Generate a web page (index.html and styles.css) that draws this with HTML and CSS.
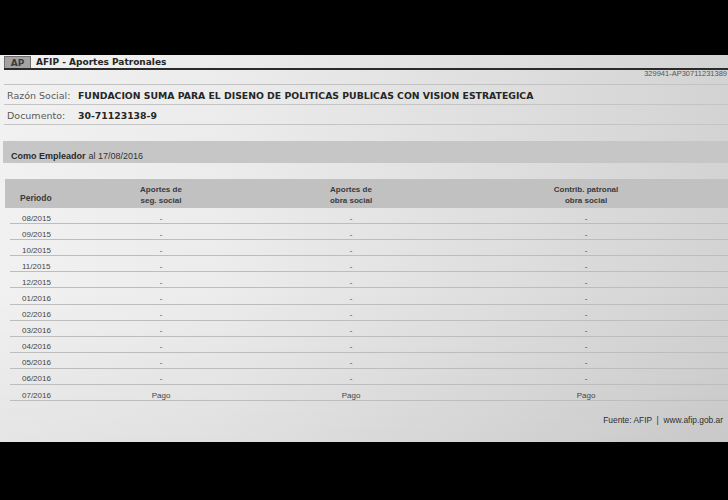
FILE: index.html
```html
<!DOCTYPE html>
<html lang="es">
<head>
<meta charset="utf-8">
<title>AFIP - Aportes Patronales</title>
<link rel="stylesheet" href="styles.css">
</head>
<body>
<div class="paper">
  <div class="topbar">
    <span class="ap">AP</span>
    <span class="title">AFIP - Aportes Patronales</span>
  </div>
  <div class="ref">329941-AP30711231389</div>
  <div class="info">
    <div class="info-row"><span class="label">Razón Social:</span><span class="value">FUNDACION SUMA PARA EL DISENO DE POLITICAS PUBLICAS CON VISION ESTRATEGICA</span></div>
    <div class="info-row"><span class="label">Documento:</span><span class="value">30-71123138-9</span></div>
  </div>
  <div class="section"><b>Como Empleador</b> al 17/08/2016</div>
  <div class="table">
    <div class="thead">
      <div class="c1">Periodo</div>
      <div class="cc">Aportes de<br>seg. social</div>
      <div class="cc">Aportes de<br>obra social</div>
      <div class="cc">Contrib. patronal<br>obra social</div>
    </div>
    <div class="tr"><div class="c1">08/2015</div><div class="cc">-</div><div class="cc">-</div><div class="cc">-</div></div>
    <div class="tr"><div class="c1">09/2015</div><div class="cc">-</div><div class="cc">-</div><div class="cc">-</div></div>
    <div class="tr"><div class="c1">10/2015</div><div class="cc">-</div><div class="cc">-</div><div class="cc">-</div></div>
    <div class="tr"><div class="c1">11/2015</div><div class="cc">-</div><div class="cc">-</div><div class="cc">-</div></div>
    <div class="tr"><div class="c1">12/2015</div><div class="cc">-</div><div class="cc">-</div><div class="cc">-</div></div>
    <div class="tr"><div class="c1">01/2016</div><div class="cc">-</div><div class="cc">-</div><div class="cc">-</div></div>
    <div class="tr"><div class="c1">02/2016</div><div class="cc">-</div><div class="cc">-</div><div class="cc">-</div></div>
    <div class="tr"><div class="c1">03/2016</div><div class="cc">-</div><div class="cc">-</div><div class="cc">-</div></div>
    <div class="tr"><div class="c1">04/2016</div><div class="cc">-</div><div class="cc">-</div><div class="cc">-</div></div>
    <div class="tr"><div class="c1">05/2016</div><div class="cc">-</div><div class="cc">-</div><div class="cc">-</div></div>
    <div class="tr"><div class="c1">06/2016</div><div class="cc">-</div><div class="cc">-</div><div class="cc">-</div></div>
    <div class="tr"><div class="c1">07/2016</div><div class="cc">Pago</div><div class="cc">Pago</div><div class="cc">Pago</div></div>
  </div>
  <div class="footer">Fuente: AFIP &nbsp;|&nbsp; www.afip.gob.ar</div>
</div>
</body>
</html>
```
FILE: styles.css
```css
html, body {
  margin: 0;
  padding: 0;
  background: #000;
}
body {
  width: 728px;
  height: 500px;
  overflow: hidden;
}
.paper {
  margin-top: 55px;
  height: 387px;
  width: 728px;
  overflow: hidden;
  background:
    linear-gradient(180deg, rgba(0,0,0,0) 60%, rgba(0,0,0,0.05) 100%),
    linear-gradient(90deg, #f1f1f1 0%, #ececec 30%, #dedede 70%, #d3d3d3 100%);
  font-family: "Liberation Sans", Arial, sans-serif;
  color: #3a3a3a;
}
.topbar {
  display: flex;
  align-items: stretch;
  height: 12px;
  padding-top: 1px;
  border-bottom: 2px solid #2b2b2b;
  margin-left: 4px;
}
.ap {
  width: 25px;
  background: #a3a3a3;
  border: 1px solid #6f6f6f;
  border-bottom: none;
  font-family: "DejaVu Sans", Verdana, sans-serif;
  font-weight: bold;
  font-size: 9px;
  line-height: 12px;
  color: #3c3c3c;
  text-align: center;
}
.title {
  padding-left: 5px;
  font-family: "DejaVu Sans", Verdana, sans-serif;
  font-weight: bold;
  font-size: 9px;
  line-height: 12px;
  color: #262626;
}
.ref {
  text-align: right;
  font-size: 7.5px;
  line-height: 5px;
  padding-top: 1px;
  color: #555;
  white-space: nowrap;
  padding-right: 1px;
  height: 13px;
}
.info {
  border-top: 1px solid #c2c2c2;
  margin-left: 4px;
}
.info-row {
  display: flex;
  align-items: center;
  height: 18px;
  padding-top: 1px;
  border-bottom: 1px solid #c4c4c4;
  font-family: "DejaVu Sans", Verdana, sans-serif;
  font-size: 9.5px;
}
.label {
  width: 71px;
  padding-left: 3px;
  color: #5a5a5a;
}
.value {
  font-weight: bold;
  font-size: 9.3px;
  color: #262626;
  white-space: nowrap;
}
.section {
  display: flex;
  align-items: center;
  gap: 3px;
  margin: 16px 0 0 3px;
  height: 22px;
  padding: 8px 0 0 8px;
  box-sizing: border-box;
  background: #c6c6c6;
  font-size: 9px;
  line-height: 1;
  color: #333;
}
.section b {
  font-weight: bold;
  color: #2a2a2a;
}
.table {
  margin: 16px 0 0 5px;
}
.thead, .tr {
  display: grid;
  grid-template-columns: 85px 142px 238px 232px 1fr;
}
.thead {
  height: 29px;
  box-sizing: border-box;
  padding-top: 6px;
  align-items: start;
  background: #c1c1c1;
  font-weight: bold;
  font-size: 8px;
  line-height: 10.5px;
  color: #3a3a3a;
}
.thead .c1 {
  padding-top: 8px;
  padding-left: 15px;
  font-size: 8.5px;
}
.tr {
  align-items: start;
  box-sizing: border-box;
  height: 16.1px;
  padding-top: 5.5px;
  border-bottom: 1px solid #bdbdbd;
  font-size: 8px;
  line-height: 10px;
  color: #444;
  margin-left: 5px;
}
.tr .c1 {
  padding-left: 12px;
}
.cc {
  text-align: center;
}
.tr .cc {
  transform: translateX(-5px);
}
.footer {
  margin-top: 14px;
  text-align: right;
  padding-right: 5px;
  font-size: 8.4px;
  color: #2e2e2e;
}
```
